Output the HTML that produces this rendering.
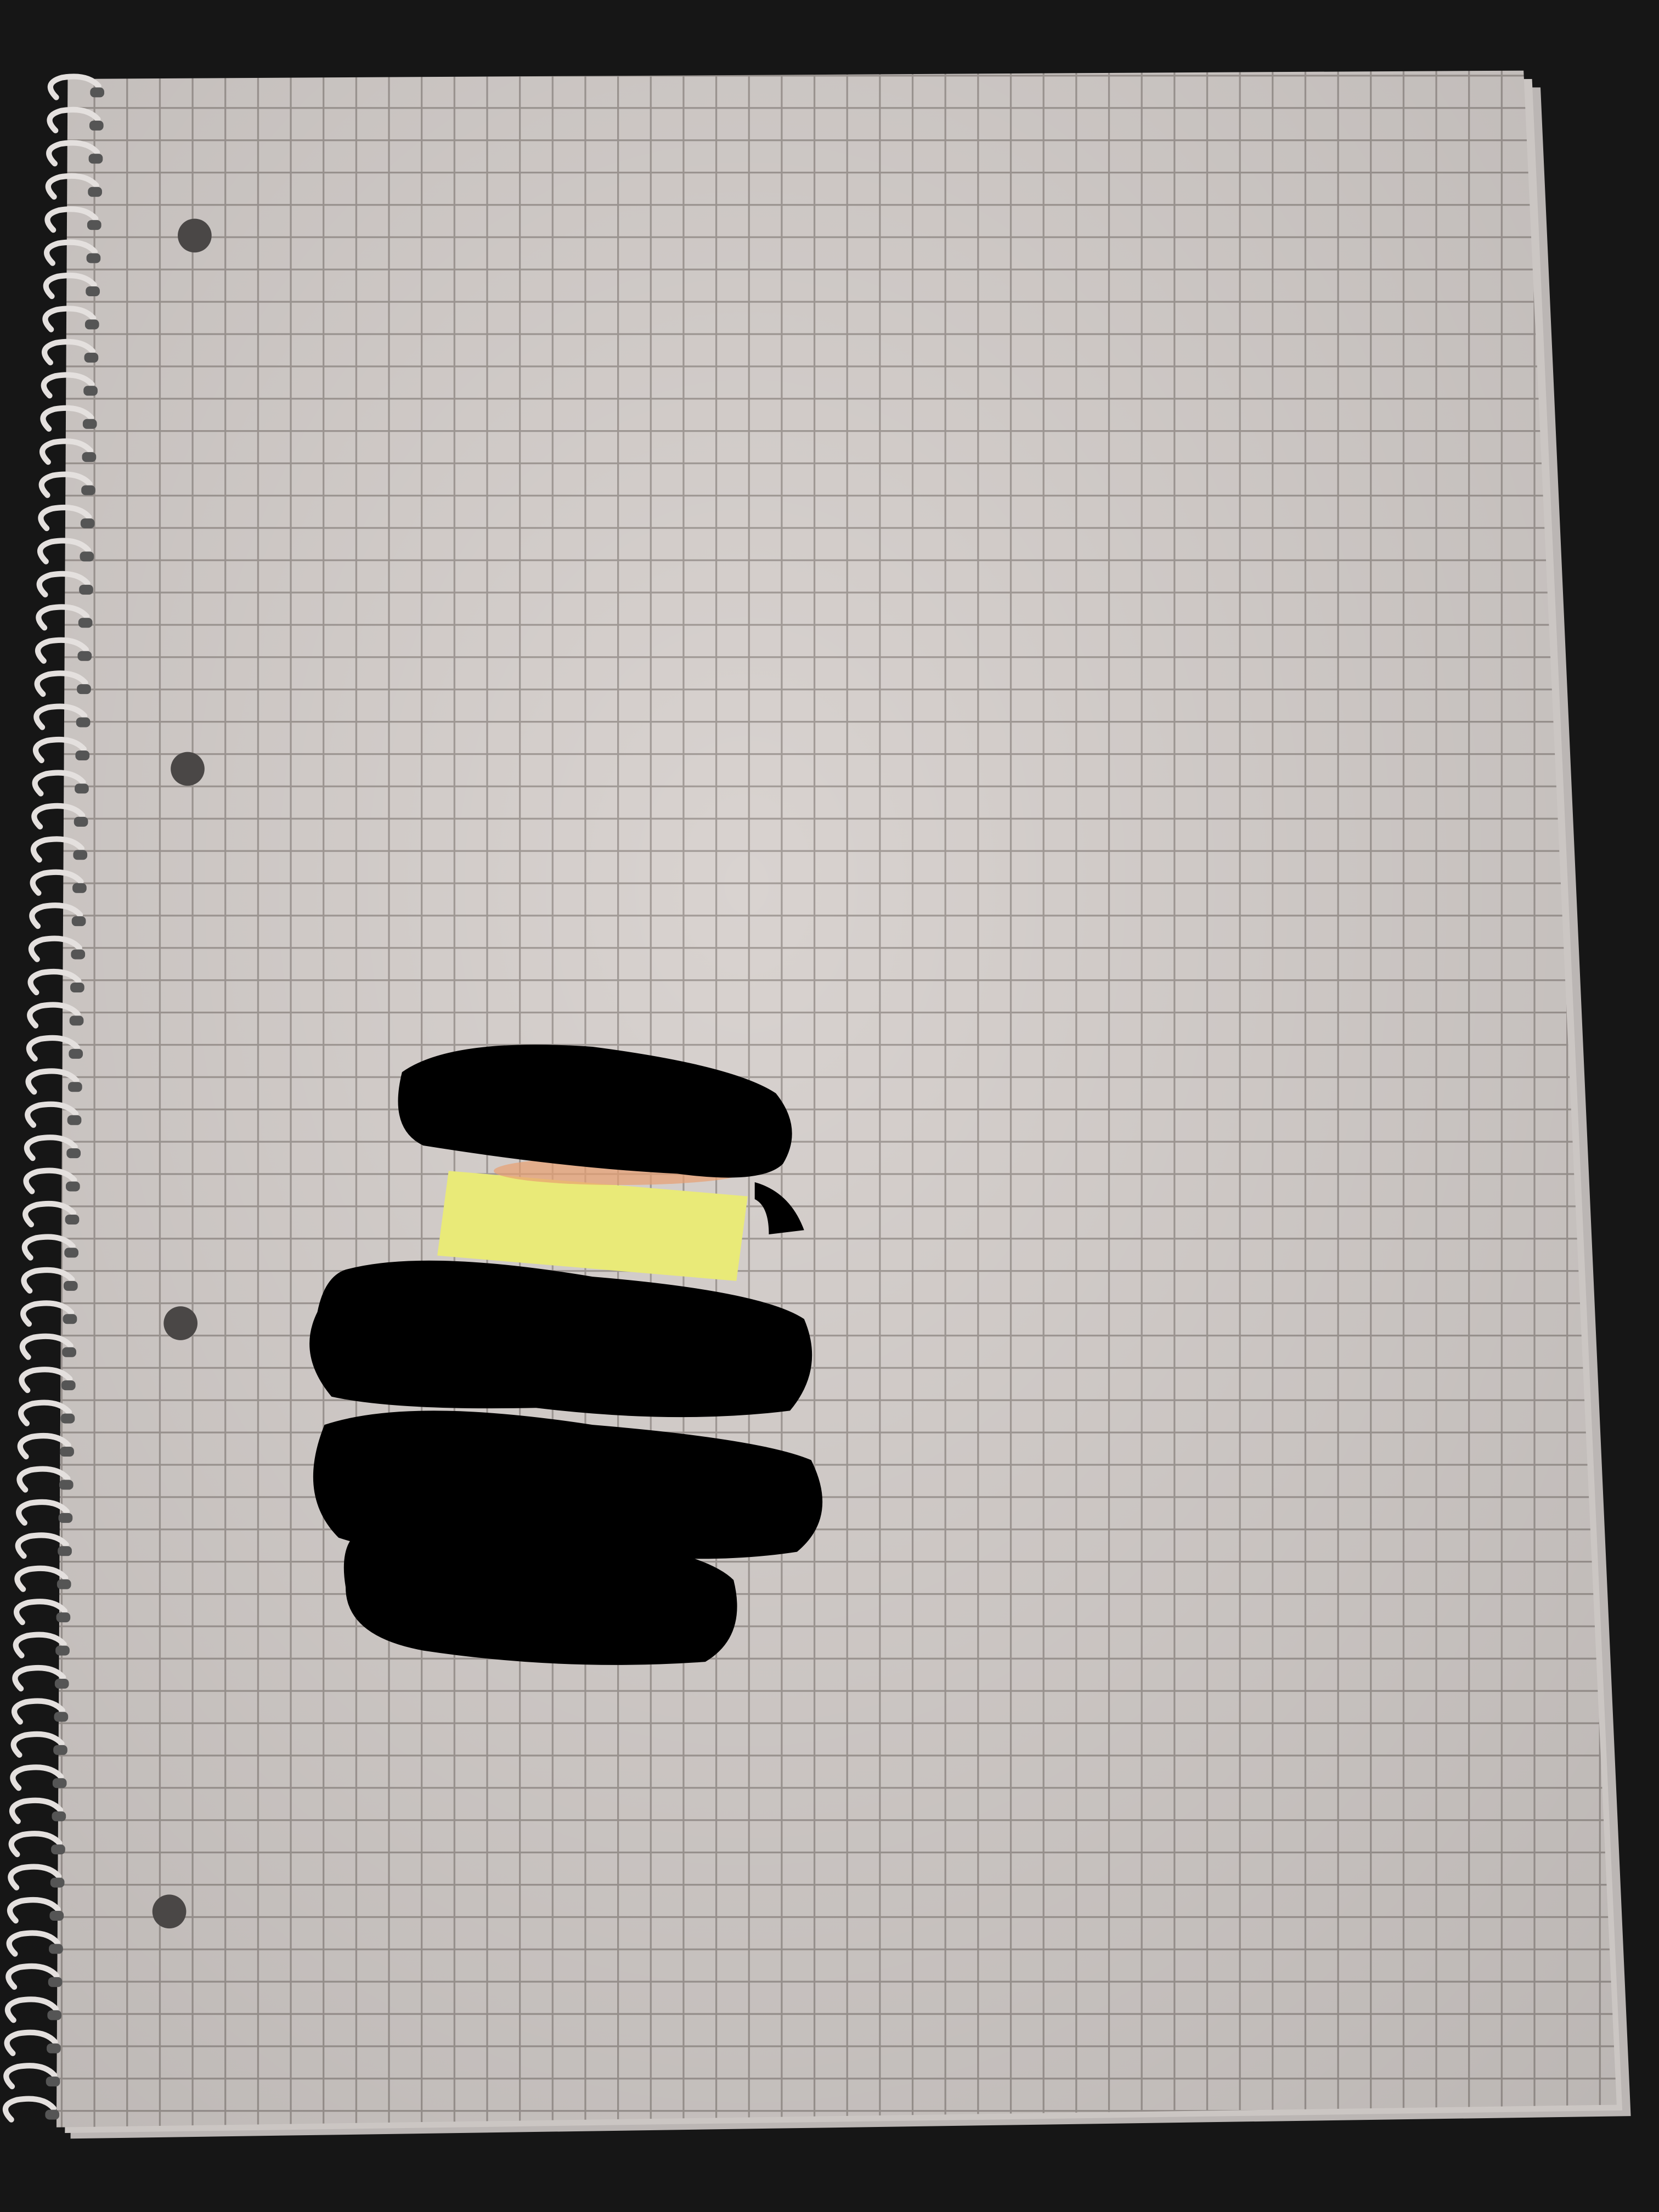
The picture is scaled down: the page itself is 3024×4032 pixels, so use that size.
<!DOCTYPE html>
<html><head><meta charset="utf-8"><style>
html,body{margin:0;padding:0;background:#161616;}
svg{display:block;width:3024px;height:4032px;}
</style></head><body>
<svg viewBox="0 0 1176 1568" preserveAspectRatio="none" xmlns="http://www.w3.org/2000/svg">
<defs>
<pattern id="g" x="89.5" y="53" width="23.2" height="22.9" patternUnits="userSpaceOnUse">
<rect width="23.2" height="22.9" fill="#d9d3d0"/>
<path d="M0 0.6H23.2M0.6 0V22.9" stroke="#a39c98" stroke-width="1.3"/>
</pattern>
<clipPath id="pc"><polygon points="48,56 1080,50 1146,1492 40,1508"/></clipPath>
<radialGradient id="sh" cx="0.45" cy="0.4" r="0.85"><stop offset="0" stop-color="#000" stop-opacity="0"/><stop offset="1" stop-color="#000" stop-opacity="0.15"/></radialGradient>
</defs>
<rect width="1176" height="1568" fill="#161616"/>
<polygon points="60,62 1092,62 1156,1500 50,1516" fill="#bbb6b4"/>
<polygon points="56,60 1086,56 1150,1496 46,1512" fill="#cbc6c3"/>
<g clip-path="url(#pc)">
<rect x="0" y="0" width="1176" height="1568" fill="url(#g)"/>
<rect x="0" y="0" width="1176" height="1568" fill="url(#sh)"/>
</g>
<g fill="#4a4746">
<ellipse cx="138" cy="167" rx="12" ry="12"/>
<ellipse cx="133" cy="545" rx="12" ry="12"/>
<ellipse cx="128" cy="938" rx="12" ry="12"/>
<ellipse cx="120" cy="1355" rx="12" ry="12"/>
</g>
<g id="spiral"></g>
<polygon points="318,830 530,848 522,908 310,890" fill="#e9ea78"/>
<ellipse cx="440" cy="830" rx="90" ry="10" fill="#e8a070" opacity="0.7"/>
<g fill="#000">
<path d="M285,760 Q320,735 420,742 Q520,755 550,775 Q570,800 555,825 Q540,840 480,832 Q400,828 300,812 Q275,800 285,760Z"/>
<path d="M535,838 Q560,845 570,872 L545,875 Q545,855 535,850Z"/>
<path d="M245,900 Q300,885 420,905 Q540,915 570,935 Q585,970 560,1000 Q480,1010 380,998 Q280,1000 235,990 Q210,960 225,930 Q230,905 245,900Z"/>
<path d="M230,1010 Q290,990 420,1010 Q540,1020 575,1035 Q595,1075 565,1100 Q500,1110 420,1100 Q300,1110 240,1090 Q210,1060 230,1010Z"/>
<path d="M255,1085 Q330,1075 420,1090 Q500,1100 520,1120 Q530,1160 500,1178 Q400,1185 300,1170 Q245,1160 245,1125 Q240,1095 255,1085Z"/>
</g>
</svg>
<script>
(function(){
var g=document.getElementById('spiral'),h='';
for(var y=65;y<1500;y+=23.5){
 var t=(y-60)/1440;var x=62-t*32;
 h+='<path d="M'+(x-22)+','+(y+4)+' q-10,-10 4,-14 q18,-3 26,6" fill="none" stroke="#e4e0de" stroke-width="4" stroke-linecap="round"/>';
 h+='<rect x="'+(x+2)+'" y="'+(y-3)+'" width="10" height="7" rx="3" fill="#555"/>';
}
g.innerHTML=h;
})();
</script>
</body></html>
